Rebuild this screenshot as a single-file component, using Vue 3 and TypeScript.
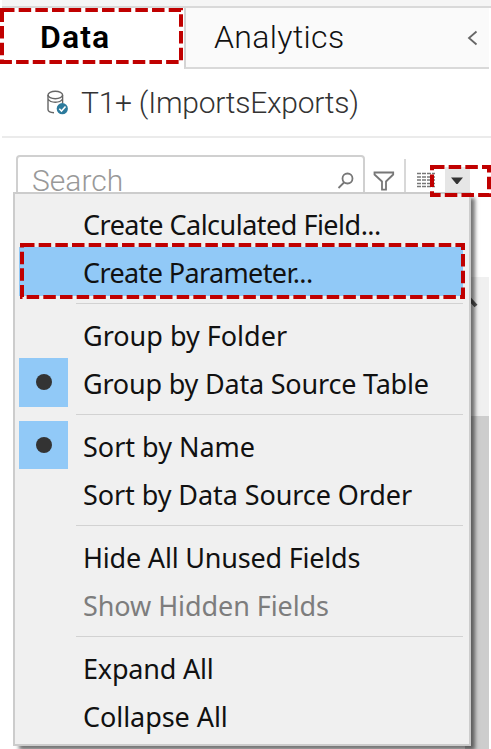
<script setup lang="ts">
interface MenuItem {
  label: string
  checked?: boolean
  active?: boolean
  disabled?: boolean
  spacing: number
}

const groups: MenuItem[][] = [
  [
    { label: 'Create Calculated Field...', spacing: -0.51 },
    { label: 'Create Parameter...', active: true, spacing: -0.62 },
  ],
  [
    { label: 'Group by Folder', spacing: 0 },
    { label: 'Group by Data Source Table', checked: true, spacing: -0.2 },
  ],
  [
    { label: 'Sort by Name', checked: true, spacing: 0 },
    { label: 'Sort by Data Source Order', spacing: -0.08 },
  ],
  [
    { label: 'Hide All Unused Fields', spacing: -0.2 },
    { label: 'Show Hidden Fields', disabled: true, spacing: -0.08 },
  ],
  [
    { label: 'Expand All', spacing: -0.2 },
    { label: 'Collapse All', spacing: -0.06 },
  ],
]
</script>

<template>
  <main class="pane">
    <div class="strip"></div>
    <nav class="tabs">
      <div class="tab tab-data"><span>Data</span></div>
      <div class="tab tab-analytics">
        <span>Analytics</span>
        <svg class="chevron" width="12" height="16" viewBox="0 0 12 16"><path d="M10.500 1.500 3 8l7.500 6.500" /></svg>
      </div>
    </nav>
    <section class="source">
      <svg class="db" width="24" height="26" viewBox="0 0 24 26">
        <g fill="none" stroke="#666" stroke-width="1.4">
          <ellipse cx="9.300" cy="5" rx="7.300" ry="3.700" />
          <path d="M2 5v14.500q0 2.800 6 3.200M16.600 5v8.500M2 9q2 3.200 7.300 3.200T16.600 9" />
        </g>
        <circle cx="16.300" cy="18.700" r="5.600" fill="#2c7a9c" />
        <path d="m13.300 18.700 2.200 2.400 4-4.600" fill="none" stroke="#fff" stroke-width="1.500" />
      </svg>
      <span>T1+ (ImportsExports)</span>
    </section>
    <section class="toolbar">
      <div class="search">
        <span>Search</span>
        <svg width="18" height="18" viewBox="0 0 18 18"><circle cx="10.500" cy="6.500" r="5" /><path d="M7 10.500 1.500 16" /></svg>
      </div>
      <svg class="funnel" width="22" height="20" viewBox="0 0 22 20"><path d="M1.500 1.500h18.700v2l-7.200 7v8.200h-4V10.500L1.500 3.500Z" /></svg>
      <div class="rule"></div>
      <svg class="list" width="20" height="16" viewBox="0 0 20 16"><path d="M1 1.500h18M1 5h18M1 8h18M1 11.500h18M1 14.500h18" /></svg>
      <div class="drop"><svg width="12" height="8" viewBox="0 0 12 8"><path d="M0 .5h12L6.600 7H5.400Z" /></svg></div>
    </section>
    <aside class="scrollbar">
      <div class="scroll-top"><svg width="24" height="18" viewBox="0 0 24 18"><path d="m2 15 9-11 10 11" /></svg></div>
      <div class="thumb"></div>
    </aside>

    <div class="menu" role="menu">
      <div v-for="(group, g) in groups" :key="g" class="group">
        <div v-for="item in group" :key="item.label" class="item" :class="{ active: item.active, disabled: item.disabled }" role="menuitem">
          <span class="check" :class="{ on: item.checked }"><i v-if="item.checked"></i></span>
          <span class="label" :style="{ letterSpacing: item.spacing + 'px' }">{{ item.label }}</span>
        </div>
      </div>
    </div>

    <svg class="marks" width="491" height="749" viewBox="0 0 491 749">
      <rect x="2" y="10" width="179" height="52" />
      <rect x="22" y="245" width="441" height="52" />
      <rect x="432" y="167" width="57" height="28" />
    </svg>
  </main>
</template>

<style>
body { margin: 0; overflow: hidden; }
</style>

<style scoped>
.pane { position: relative; width: 491px; height: 749px; overflow: hidden; background: #fff; font-family: Roboto, sans-serif; display: flex; flex-direction: column; }
.strip { height: 6px; margin-left: 2px; background: #f5f5f5; border-bottom: 2px solid #d9d9d9; }
.tabs { display: flex; height: 61px; }
.tab { box-sizing: border-box; font-size: 32px; line-height: 59px; color: #111; }
.tab-data { width: 184px; padding-left: 40px; font-weight: 600; letter-spacing: 1.1px; color: #000; }
.tab-analytics { flex: 1; display: flex; align-items: center; justify-content: space-between; padding: 0 11px 0 28px; background: #fafafa; border-left: 2px solid #d4d4d4; border-bottom: 2px solid #d9d9d9; font-weight: 300; letter-spacing: .35px; margin-right: 2px; }
.chevron { fill: none; stroke: #666; stroke-width: 1.8; }
.source { display: flex; align-items: center; height: 69px; box-sizing: border-box; margin-left: 2px; padding-left: 44px; border-bottom: 2px solid #ebebeb; font-size: 30px; font-weight: 300; letter-spacing: -.25px; color: #333; }
.db { margin-right: 11px; }
.toolbar { display: flex; align-items: flex-start; padding: 17px 0 0 16px; height: 58px; box-sizing: border-box; }
.search { box-sizing: border-box; width: 349px; height: 50px; border: 2px solid #d0d0d0; border-radius: 4px; padding: 6px 8px 0 14px; display: flex; justify-content: space-between; font-size: 30px; line-height: 36px; font-weight: 300; color: #999; }
.search svg { margin-top: 9px; fill: none; stroke: #777; stroke-width: 1.8; }
.funnel { margin: 16px 0 0 8px; fill: none; stroke: #777; stroke-width: 1.8; }
.rule { width: 2px; height: 40px; margin: 4px 0 0 9px; background: #d8d8d8; }
.list { margin: 17px 0 0 10px; fill: none; stroke: #777; stroke-width: 1.5; stroke-dasharray: 4 1; }
.drop { width: 25px; height: 27px; margin: 12px 0 0 9px; background: #e6e6e6; display: flex; align-items: center; justify-content: center; fill: #333; }
.drop svg { margin-right: 1px; }
.scrollbar { align-self: flex-end; width: 24px; margin: 81px 2px 0 0; flex: 1; background: #f0f0f0; display: flex; flex-direction: column; }
.scroll-top { height: 139px; padding-top: 14px; box-sizing: border-box; }
.scroll-top svg { margin-left: -10px; fill: none; stroke: #555; stroke-width: 4; }
.thumb { flex: 1; background: #cdcdcd; }
.menu { position: absolute; left: 13px; top: 192px; width: 458px; height: 554px; box-sizing: border-box; padding: 4.500px 6px 0 4px; border: 2px solid #ccc; background: #f0f0f0; box-shadow: 5px 5px 4px -1px rgba(0, 0, 0, .55); font-family: "Noto Sans", sans-serif; font-size: 27px; color: #111; }
.group + .group { border-top: 1px solid transparent; border-image: linear-gradient(90deg, transparent 58px, #d2d2d2 58px) 1; margin-top: 7px; padding-top: 6px; }
.item { display: flex; align-items: center; height: 48.500px; }
.active { background: #91c9f7; }
.disabled { color: #7d7d7d; }
.check { width: 49px; height: 48.500px; margin-right: 15px; display: flex; align-items: center; justify-content: center; }
.check.on { background: #91c9f7; }
.check i { width: 16px; height: 16px; margin-left: 1px; border-radius: 50%; background: #333; }
.label { white-space: nowrap; padding-top: 3px; }
.marks { position: absolute; inset: 0; fill: none; stroke: #c00000; stroke-width: 4; stroke-dasharray: 12.500 4.170; pointer-events: none; }
</style>
